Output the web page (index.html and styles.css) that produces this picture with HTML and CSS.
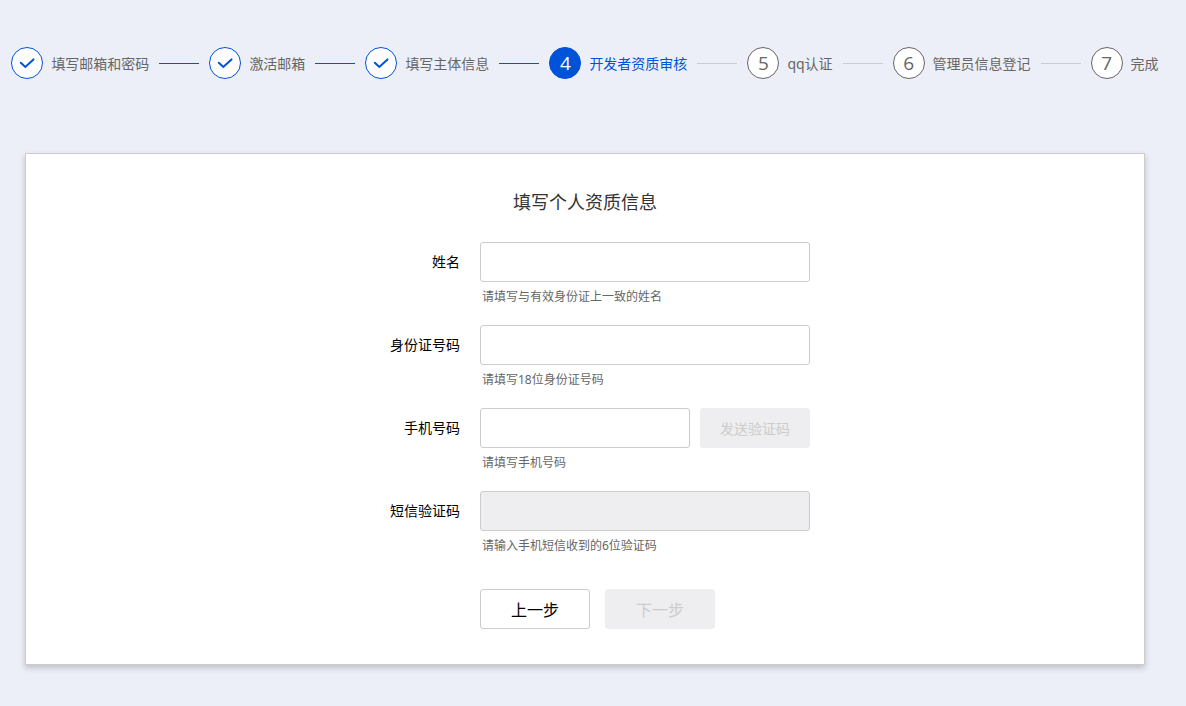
FILE: index.html
```html
<!DOCTYPE html>
<html lang="zh-CN">
<head>
  <meta charset="UTF-8">
  <meta name="viewport" content="width=device-width, initial-scale=1.0">
  <title>填写个人资质信息</title>
  <link rel="stylesheet" href="styles.css">
</head>
<body>
  <!-- 步骤条 -->
  <ol class="steps">
    <li class="step done">
      <span class="step-icon"><svg viewBox="0 0 30 30"><path d="M8.8 14.8l4.5 4.2 8.2-7.6"/></svg></span>
      <span class="step-text">填写邮箱和密码</span>
    </li>
    <li class="step done">
      <span class="step-icon"><svg viewBox="0 0 30 30"><path d="M8.8 14.8l4.5 4.2 8.2-7.6"/></svg></span>
      <span class="step-text">激活邮箱</span>
    </li>
    <li class="step done">
      <span class="step-icon"><svg viewBox="0 0 30 30"><path d="M8.8 14.8l4.5 4.2 8.2-7.6"/></svg></span>
      <span class="step-text">填写主体信息</span>
    </li>
    <li class="step active">
      <span class="step-icon">4</span>
      <span class="step-text">开发者资质审核</span>
    </li>
    <li class="step">
      <span class="step-icon">5</span>
      <span class="step-text">qq认证</span>
    </li>
    <li class="step">
      <span class="step-icon">6</span>
      <span class="step-text">管理员信息登记</span>
    </li>
    <li class="step">
      <span class="step-icon">7</span>
      <span class="step-text">完成</span>
    </li>
  </ol>

  <!-- 表单 -->
  <main class="card">
    <h1>填写个人资质信息</h1>
    <form class="form">
      <div class="form-item">
        <label for="name">姓名</label>
        <div class="field">
          <input id="name" type="text">
          <p class="hint">请填写与有效身份证上一致的姓名</p>
        </div>
      </div>
      <div class="form-item">
        <label for="idcard">身份证号码</label>
        <div class="field">
          <input id="idcard" type="text">
          <p class="hint">请填写18位身份证号码</p>
        </div>
      </div>
      <div class="form-item">
        <label for="phone">手机号码</label>
        <div class="field">
          <div class="input-group">
            <input id="phone" type="tel">
            <button class="btn btn-code" type="button" disabled>发送验证码</button>
          </div>
          <p class="hint">请填写手机号码</p>
        </div>
      </div>
      <div class="form-item">
        <label for="code">短信验证码</label>
        <div class="field">
          <input id="code" type="text" disabled>
          <p class="hint">请输入手机短信收到的6位验证码</p>
        </div>
      </div>
      <div class="actions">
        <button class="btn" type="button">上一步</button>
        <button class="btn" type="submit" disabled>下一步</button>
      </div>
    </form>
  </main>
</body>
</html>
```
FILE: styles.css
```css
* {
  box-sizing: border-box;
}
body {
  margin: 0;
  padding: 47px 16px 41px 0;
  background: #eceff8;
  color: #000;
  font-family: "Noto Sans", "Noto Sans CJK SC", sans-serif;
  font-size: 14px;
  line-height: 20px;
}

/* 步骤条 */
.steps {
  display: flex;
  justify-content: center;
  margin: 0;
  padding: 0;
  list-style: none;
}
.step {
  display: flex;
  align-items: center;
  color: #666;
  white-space: nowrap;
}
.step-icon {
  width: 32px;
  height: 32px;
  margin-right: 8px;
  border: 1px solid #666;
  border-radius: 50%;
  background: #fff;
  font-family: "Open Sans", sans-serif;
  font-size: 19px;
  line-height: 30px;
  text-align: center;
}
.step-icon svg {
  display: block;
  width: 30px;
  height: 30px;
  fill: none;
  stroke: #0052d9;
  stroke-width: 2;
  stroke-linecap: round;
}
.step-text {
  padding-top: 2px;
}
.step:not(:last-child)::after {
  content: "";
  width: 40px;
  height: 1px;
  margin: 0 10px;
  background: #ccc;
}
.step.done .step-icon {
  border-color: #0052d9;
}
.step.done::after {
  background: #0052d9;
}
.step.active {
  color: #0052d9;
}
.step.active .step-icon {
  border-color: #0052d9;
  background: #0052d9;
  color: #fff;
}

/* 卡片 */
.card {
  max-width: 1120px;
  margin: 74px auto 0;
  padding: 36px 0 35px;
  border: 1px solid #ccc;
  background: #fff;
  box-shadow: 0 3px 6px rgba(0, 0, 0, 0.2);
}
h1 {
  margin: 0 0 28px;
  color: #333;
  font-size: 18px;
  font-weight: normal;
  line-height: 24px;
  text-align: center;
}

/* 表单 */
.form {
  width: 450px;
  margin: 0 auto;
}
.form-item {
  display: flex;
  gap: 20px;
  margin-bottom: 18px;
}
.form-item label {
  width: 100px;
  line-height: 40px;
  text-align: right;
}
.field {
  flex: 1;
}
input {
  display: block;
  width: 100%;
  height: 40px;
  padding: 0 10px;
  border: 1px solid #ccc;
  border-radius: 3px;
  background: #fff;
  font: inherit;
}
input:disabled {
  background: #eeeef0;
}
.input-group {
  display: flex;
  gap: 10px;
}
.input-group input {
  flex: 1;
  min-width: 0;
}
.hint {
  margin: 5px 0 0;
  padding-left: 2px;
  color: #666;
  font-size: 12px;
}
.btn {
  width: 110px;
  height: 40px;
  padding: 0;
  border: 1px solid #ccc;
  border-radius: 3px;
  background: #fff;
  color: #000;
  font-family: inherit;
  font-size: 16px;
  cursor: pointer;
}
.btn:disabled {
  border-color: #eeeef0;
  background: #eeeef0;
  color: #ccc;
  cursor: default;
}
.btn-code {
  font-size: 14px;
}
.actions {
  display: flex;
  gap: 15px;
  margin-top: 33px;
  padding-left: 120px;
}
```
